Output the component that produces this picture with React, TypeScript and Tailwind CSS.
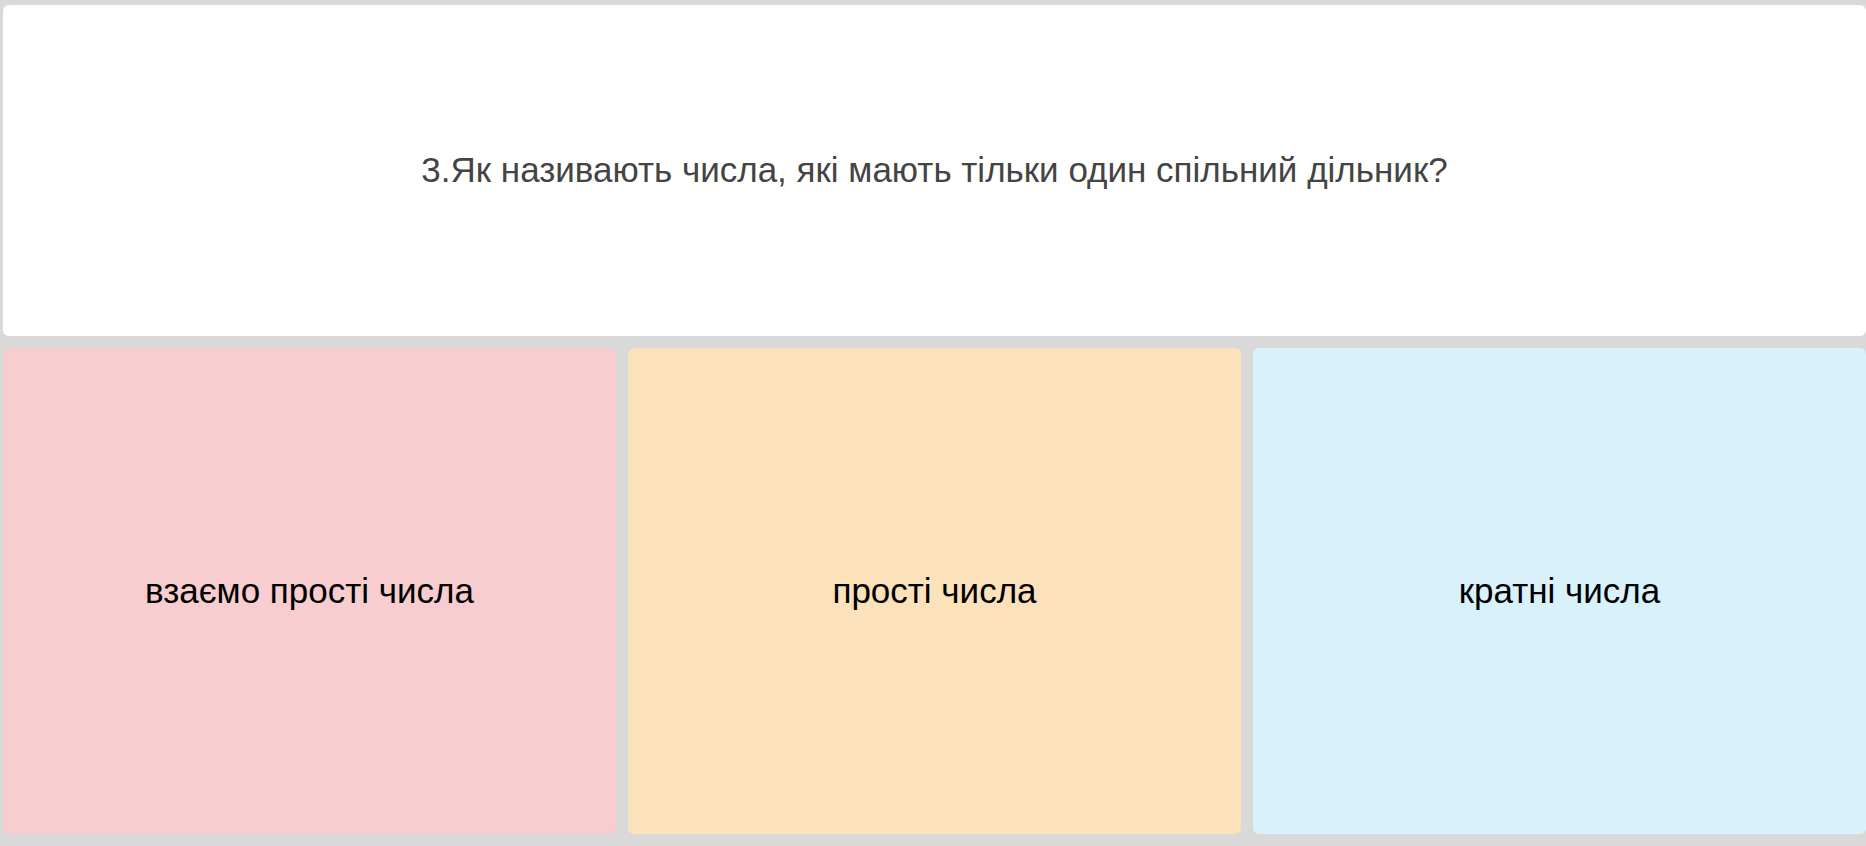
import { FC } from "react";

const answers = [
  { text: "взаємо прості числа", color: "bg-[#f7cdcf]" },
  { text: "прості числа", color: "bg-[#fce2ba]" },
  { text: "кратні числа", color: "bg-[#d9f1fb]" },
];

const App: FC = () => {
  return (
    <div
      className="flex h-[846px] w-[1866px] flex-col gap-[12px] overflow-hidden bg-[#d9d9d9] pb-[12px] pl-[3px] pt-[5px]"
      style={{ fontFamily: '"Liberation Sans", Arial, sans-serif' }}
    >
      <div className="flex h-[331px] shrink-0 items-center justify-center rounded-md bg-white">
        <p className="text-[35px] text-[#444444]">
          3.Як називають числа, які мають тільки один спільний дільник?
        </p>
      </div>
      <div className="grid flex-1 grid-cols-3 gap-[12px]">
        {answers.map((a, i) => (
          <div
            key={i}
            className={`flex items-center justify-center rounded-md ${a.color}`}
          >
            <span className="text-[35px] text-black">{a.text}</span>
          </div>
        ))}
      </div>
    </div>
  );
};

export default App;
